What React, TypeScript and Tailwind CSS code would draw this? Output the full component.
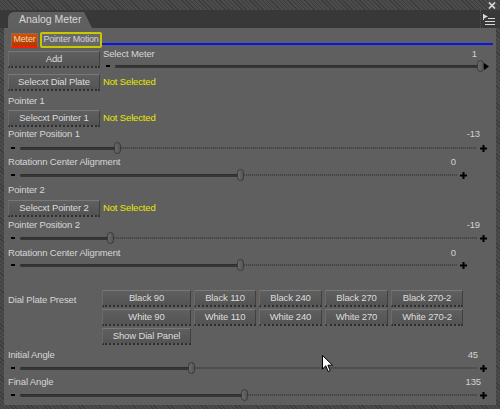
import React from "react";

const font = "font-['Liberation_Sans',Arial,sans-serif]";
const txt = "text-[9.5px] tracking-[-0.15px]";

function Btn({ label, w }: { label: string; w: string }) {
  return (
    <div
      className={`${w} h-[17px] shrink-0 flex items-center justify-center whitespace-nowrap bg-[linear-gradient(#5f5f5f,#545454)] border-t border-t-[#787878] border-l border-l-[#6a6a6a] border-r border-r-[#404040] border-b-2 border-b-[#2e2e2e] ${txt} text-[#dcdcdc]`}
      style={{ borderBottomStyle: "dotted" }}
    >
      {label}
    </div>
  );
}

function Plus() {
  return (
    <svg width="7" height="7" viewBox="0 0 7 7" className="shrink-0 block">
      <rect x="0" y="2.5" width="7" height="2" fill="#000" />
      <rect x="2.5" y="0" width="2" height="7" fill="#000" />
    </svg>
  );
}

function Slider({
  track,
  thumb,
  arrow,
}: {
  track: string;
  thumb: number;
  arrow?: boolean;
}) {
  return (
    <div className="flex items-center h-[12px]">
      <span className="ml-[3px] w-[4px] h-[2px] bg-black shrink-0" />
      <div className={`${track} ml-[5px] relative flex items-center h-full shrink-0`}>
        <div className="h-[3px] bg-[#363636] rounded-l-full border-t border-[#2e2e2e]" style={{ width: thumb }} />
        <div className="flex-1 h-[2px] bg-[repeating-linear-gradient(90deg,#464646_0_1px,#575757_1px_2px)]" />
        <div
          className="absolute top-[0px] w-[7px] h-[12px] rounded-full border border-[#3a3a3a] bg-[linear-gradient(90deg,#6a6a6a,#555)]"
          style={{ left: thumb - 3 }}
        />
      </div>
      {arrow ? (
        <svg width="5" height="7" viewBox="0 0 5 7" className="ml-[1px] shrink-0">
          <path d="M0 0 L5 3.5 L0 7 Z" fill="#000" />
        </svg>
      ) : (
        <span className="ml-[3px]">
          <Plus />
        </span>
      )}
    </div>
  );
}

function LabelRow({ label, value, w, mt }: { label: string; value?: string; w: string; mt: string }) {
  return (
    <div className={`${w} ${mt} h-[12px] flex items-center justify-between ${txt} text-[#d6d6d6] leading-none whitespace-nowrap`}>
      <span>{label}</span>
      {value !== undefined && <span className="text-[#d2d2d2]">{value}</span>}
    </div>
  );
}

function SelectRow({ label, mt }: { label: string; mt: string }) {
  return (
    <div className={`${mt} flex items-center`}>
      <Btn label={label} w="w-[92px]" />
      <span className={`ml-[3px] ${txt} text-[#e8e800]`}>Not Selected</span>
    </div>
  );
}

export default function App() {
  const row1 = [
    ["Black 90", "w-[89px]"],
    ["Black 110", "w-[62px]"],
    ["Black 240", "w-[63px]"],
    ["Black 270", "w-[63px]"],
    ["Black 270-2", "w-[72px]"],
  ];
  const row2 = [
    ["White 90", "w-[89px]"],
    ["White 110", "w-[62px]"],
    ["White 240", "w-[63px]"],
    ["White 270", "w-[63px]"],
    ["White 270-2", "w-[72px]"],
  ];
  return (
    <div
      className={`${font} relative w-[500px] h-[409px] overflow-hidden flex flex-col bg-[repeating-linear-gradient(45deg,#3c3c3c_0_1px,#4b4b4b_1px_3px)]`}
    >
      {/* top strip */}
      <div className="h-[10px] flex items-center justify-end pr-[4px]">
        <svg width="8" height="7" viewBox="0 0 8 7">
          <path d="M1 0.5 L7 6.5 M7 0.5 L1 6.5" stroke="#dcdcdc" strokeWidth="1.6" />
        </svg>
      </div>
      {/* header with tab */}
      <div className="h-[18px] bg-[#383838] flex items-end">
        <div className="ml-[8px] w-[84px] h-[16px] bg-[#606060] rounded-tl-[6px] [clip-path:polygon(0_0,76px_0,84px_100%,0_100%)] flex items-center pl-[11px] text-[10.5px] text-[#d8d8d8] whitespace-nowrap">
          Analog Meter
        </div>
        <div className="ml-auto mr-[3px] w-[17px] h-full border-l border-dotted border-[#555] flex items-center justify-center">
          <svg width="12" height="11" viewBox="0 0 12 11">
            <path d="M0 0 L5 2.5 L0 5 Z" fill="#d8d8d8" />
            <rect x="0" y="0" width="1" height="6" fill="#d8d8d8" />
            <rect x="5" y="4" width="7" height="1" fill="#d8d8d8" />
            <rect x="2" y="7" width="10" height="1" fill="#d8d8d8" />
            <rect x="2" y="10" width="10" height="1" fill="#d8d8d8" />
          </svg>
        </div>
      </div>
      {/* panel */}
      <div className="mx-[4px] h-[377px] bg-[#5f5f5f] flex flex-col pl-[4px]">
        {/* inner tabs */}
        <div className="mt-[4px] h-[16px] flex items-end">
          <div className="ml-[3px] w-[27px] h-[15px] shrink-0 flex items-center justify-center bg-[linear-gradient(#d45000,#a83c00)] border-t border-x border-[#8a6a5a] border-b-2 border-b-[#ff1a00] text-[9px] tracking-[-0.2px] text-[#f2d2b8] whitespace-nowrap">
            Meter
          </div>
          <div className="ml-[2px] w-[62px] h-[16px] shrink-0 flex items-center justify-center bg-[#686868] border-2 border-[#c8c800] rounded-[2px] text-[9px] tracking-[-0.2px] text-[#d4d4d4] whitespace-nowrap">
            Pointer Motion
          </div>
          <div className="flex-1 h-[2px] mb-[3px] mr-[3px] bg-[#0a14f0]" />
        </div>
        {/* add + select meter */}
        <div className="mt-[3px] flex items-start">
          <Btn label="Add" w="w-[92px]" />
          <div className="ml-[3px] flex flex-col">
            <LabelRow label="Select Meter" value="1" w="w-[374px]" mt="mt-[-3px]" />
            <Slider track="w-[368px]" thumb={365} arrow />
          </div>
        </div>
        <div className="mt-[2px] flex items-center">
          <Btn label="Selecxt Dial Plate" w="w-[92px]" />
          <span className={`ml-[3px] ${txt} text-[#e8e800]`}>Not Selected</span>
        </div>

        <LabelRow label="Pointer 1" w="w-[472px]" mt="mt-[4px]" />
        <SelectRow label="Selecxt Pointer 1" mt="mt-[3px]" />
        <LabelRow label="Pointer Position 1" value="-13" w="w-[472px]" mt="mt-[1px]" />
        <div className="mt-[2px]">
          <Slider track="w-[457px]" thumb={97} />
        </div>
        <LabelRow label="Rotationn Center Alignment" value="0" w="w-[448px]" mt="mt-[2px]" />
        <div className="mt-[1px]">
          <Slider track="w-[437px]" thumb={220} />
        </div>

        <LabelRow label="Pointer 2" w="w-[472px]" mt="mt-[3px]" />
        <SelectRow label="Selecxt Pointer 2" mt="mt-[4px]" />
        <LabelRow label="Pointer Position 2" value="-19" w="w-[472px]" mt="mt-[2px]" />
        <div className="mt-[1px]">
          <Slider track="w-[457px]" thumb={90} />
        </div>
        <LabelRow label="Rotationn Center Alignment" value="0" w="w-[448px]" mt="mt-[3px]" />
        <div>
          <Slider track="w-[437px]" thumb={220} />
        </div>

        {/* presets */}
        <div className="mt-[19px] flex">
          <div className={`w-[94px] pt-[3px] ${txt} text-[#d6d6d6]`}>Dial Plate Preset</div>
          <div className="flex flex-col gap-[2px]">
            <div className="flex gap-[3px]">
              {row1.map(([l, w]) => (
                <Btn key={l} label={l} w={w} />
              ))}
            </div>
            <div className="flex gap-[3px]">
              {row2.map(([l, w]) => (
                <Btn key={l} label={l} w={w} />
              ))}
            </div>
            <div className="flex">
              <Btn label="Show Dial Panel" w="w-[89px]" />
            </div>
          </div>
        </div>

        <LabelRow label="Initial Angle" value="45" w="w-[470px]" mt="mt-[4px]" />
        <div className="mt-[1px]">
          <Slider track="w-[457px]" thumb={171} />
        </div>
        <LabelRow label="Final Angle" value="135" w="w-[473px]" mt="mt-[2px]" />
        <div className="mt-[1px]">
          <Slider track="w-[457px]" thumb={224} />
        </div>
      </div>

      {/* mouse cursor */}
      <svg className="absolute left-[322px] top-[355px]" width="12" height="18" viewBox="0 0 12 18">
        <path d="M0.5 0.5 L0.5 14 L3.8 10.8 L6.2 16.5 L8.2 15.6 L5.9 10.2 L10.5 10.2 Z" fill="#fff" stroke="#000" strokeWidth="1" />
      </svg>
    </div>
  );
}
